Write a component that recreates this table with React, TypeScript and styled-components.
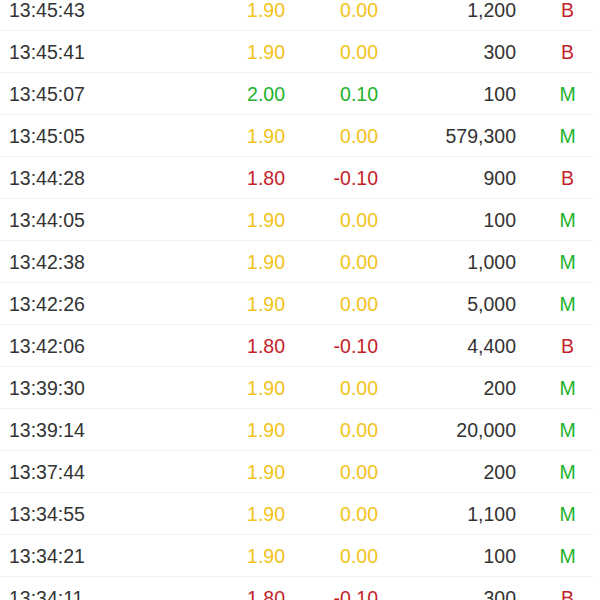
import * as React from 'react';
import styled, { createGlobalStyle } from 'styled-components';

const GlobalStyle = createGlobalStyle`
    html, body {
        margin: 0;
        padding: 0;
        background: #ffffff;
        overflow: hidden;
    }
`;

const colors = {
    text: '#333333',
    up: '#22b32b',
    down: '#c41f2c',
    flat: '#f2c31a',
    line: '#f1f1f1',
};

type Tone = 'up' | 'down' | 'flat';

interface ITrade {
    time: string;
    price: string;
    change: string;
    volume: string;
    side: 'B' | 'M';
    tone: Tone;
}

const trades: ITrade[] = [
    { time: '13:45:43', price: '1.90', change: '0.00', volume: '1,200', side: 'B', tone: 'flat' },
    { time: '13:45:41', price: '1.90', change: '0.00', volume: '300', side: 'B', tone: 'flat' },
    { time: '13:45:07', price: '2.00', change: '0.10', volume: '100', side: 'M', tone: 'up' },
    { time: '13:45:05', price: '1.90', change: '0.00', volume: '579,300', side: 'M', tone: 'flat' },
    { time: '13:44:28', price: '1.80', change: '-0.10', volume: '900', side: 'B', tone: 'down' },
    { time: '13:44:05', price: '1.90', change: '0.00', volume: '100', side: 'M', tone: 'flat' },
    { time: '13:42:38', price: '1.90', change: '0.00', volume: '1,000', side: 'M', tone: 'flat' },
    { time: '13:42:26', price: '1.90', change: '0.00', volume: '5,000', side: 'M', tone: 'flat' },
    { time: '13:42:06', price: '1.80', change: '-0.10', volume: '4,400', side: 'B', tone: 'down' },
    { time: '13:39:30', price: '1.90', change: '0.00', volume: '200', side: 'M', tone: 'flat' },
    { time: '13:39:14', price: '1.90', change: '0.00', volume: '20,000', side: 'M', tone: 'flat' },
    { time: '13:37:44', price: '1.90', change: '0.00', volume: '200', side: 'M', tone: 'flat' },
    { time: '13:34:55', price: '1.90', change: '0.00', volume: '1,100', side: 'M', tone: 'flat' },
    { time: '13:34:21', price: '1.90', change: '0.00', volume: '100', side: 'M', tone: 'flat' },
    { time: '13:34:11', price: '1.80', change: '-0.10', volume: '300', side: 'B', tone: 'down' },
];

// list is scrolled a little, so the first row sits under the top edge
const List = styled.div`
    margin-top: -11px;
    font-family: 'Liberation Sans', Arial, sans-serif;
    font-size: 19.5px;
    color: ${colors.text};
`;

const Row = styled.div`
    display: grid;
    grid-template-columns: 1fr 85px 93px 138px 77px;
    align-items: center;
    height: 40px;
    padding: 1px 0 0 9px;
    margin-right: 7px;
    border-bottom: 1px solid ${colors.line};
`;

const Time = styled.span`
    text-align: left;
`;

const Num = styled.span<{ $tone?: Tone }>`
    text-align: right;
    color: ${(p) => (p.$tone ? colors[p.$tone] : colors.text)};
`;

const Side = styled.span<{ $side: 'B' | 'M' }>`
    padding-left: 26px;
    text-align: center;
    color: ${(p) => (p.$side === 'B' ? colors.down : colors.up)};
`;

const App = () => (
    <>
        <GlobalStyle />
        <List>
            {trades.map((t, i) => (
                <Row key={i}>
                    <Time>{t.time}</Time>
                    <Num $tone={t.tone}>{t.price}</Num>
                    <Num $tone={t.tone}>{t.change}</Num>
                    <Num>{t.volume}</Num>
                    <Side $side={t.side}>{t.side}</Side>
                </Row>
            ))}
        </List>
    </>
);

export default App;
